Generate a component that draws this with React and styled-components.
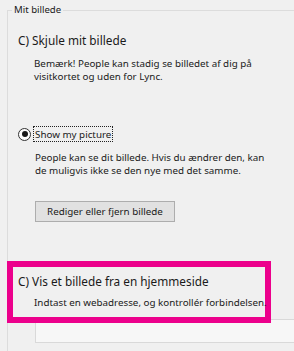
import React from 'react'
import styled, { createGlobalStyle } from 'styled-components';

const GlobalStyle = createGlobalStyle`
    html, body {
        margin: 0;
        background: #f0f0f0;
    }
    body {
        font-family: "Segoe UI", "Noto Sans", sans-serif;
        color: #1a1a1a;
        overflow: hidden;
    }
`;

function App() {
    return (
        <>
            <GlobalStyle />
            <PageStyled>
                <GroupBox>
                    <Legend>Mit billede</Legend>
                    <Option>
                        <Heading>C) Skjule mit billede</Heading>
                        <Note>
                            Bemærk! People kan stadig se billedet af dig på<br />
                            visitkortet og uden for Lync.
                        </Note>
                    </Option>

                    <Option className='show'>
                        <RadioRow>
                            <Radio />
                            <FocusLabel>Show my picture</FocusLabel>
                        </RadioRow>
                        <Note $indent={17}>
                            People kan se dit billede. Hvis du ændrer den, kan<br />
                            de muligvis ikke se den nye med det samme.
                        </Note>
                        <Button>Rediger eller fjern billede</Button>
                    </Option>

                    <Highlight>
                        <Heading>C) Vis et billede fra en hjemmeside</Heading>
                        <Note $indent={16}>
                            Indtast en webadresse, og kontrollér forbindelsen.
                        </Note>
                    </Highlight>
                    <UrlInput />
                </GroupBox>
            </PageStyled>
        </>
    )
}

const PageStyled = styled.div`
    width: 294px;
    height: 351px;
    overflow: hidden;
`;

const GroupBox = styled.fieldset`
    margin: 3px 0 0 7px;
    padding: 0;
    min-width: 0;
    height: 400px;
    border: 0;
    border-top: 1px solid #dcdcdc;
    border-left: 1px solid #dcdcdc;
`;

const Legend = styled.legend`
    margin-left: 4px;
    padding: 0 2px;
    font-size: 9.6px;
    line-height: 14px;
`;

const Option = styled.div`
    padding-left: 10px;
    &.show{
        margin-top: 43px;
    }
`;

const Heading = styled.div`
    margin-top: 15px;
    font-size: 11.8px;
    line-height: 16px;
    white-space: nowrap;
`;

const Note = styled.p`
    margin: 9px 0 0;
    padding-left: ${p => p.$indent ?? 16}px;
    font-size: 9.8px;
    line-height: 13px;
    white-space: nowrap;
`;

const RadioRow = styled.div`
    display: flex;
    align-items: center;
    gap: 2px;
`;

const Radio = styled.span`
    position: relative;
    width: 11px;
    height: 11px;
    border: 1px solid #333;
    border-radius: 50%;
    background: #fff;
    &::after{
        content: '';
        position: absolute;
        left: 2.5px;
        top: 2.5px;
        width: 6px;
        height: 6px;
        border-radius: 50%;
        background: #1a1a1a;
    }
`;

const FocusLabel = styled.span`
    padding: 1px 1px 0;
    border: 1px dotted #222;
    font-size: 9.8px;
    line-height: 13px;
`;

const Button = styled.button`
    display: block;
    margin: 24px 0 0 17px;
    width: 140px;
    height: 21px;
    padding: 0;
    border: 1px solid #adadad;
    background: #e1e1e1;
    font-family: inherit;
    font-size: 9.8px;
    color: #1a1a1a;
`;

const Highlight = styled.div`
    position: relative;
    z-index: 1;
    box-sizing: border-box;
    margin: 39px 0 0 -1px;
    width: 264px;
    height: 62px;
    padding: 0 0 0 5px;
    border: 6px solid #ec008c;
    ${Heading}{
        margin-top: 6px;
    }
    ${Note}{
        margin-top: 7px;
    }
`;

const UrlInput = styled.div`
    margin: -4px 0 0 27px;
    height: 22px;
    border: 1px solid #d9d9d9;
    border-right: 0;
    background: #f7f7f7;
`;

export default App;
